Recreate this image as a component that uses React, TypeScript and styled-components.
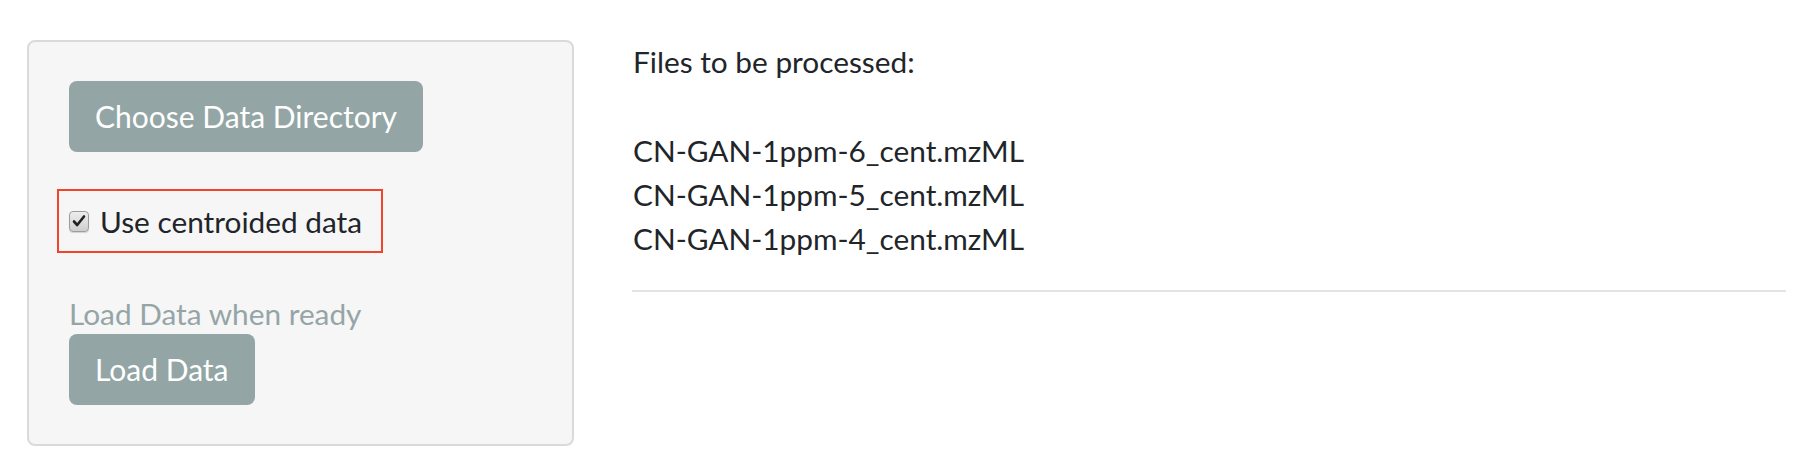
import React from "react";
import styled, { createGlobalStyle } from "styled-components";

const Global = createGlobalStyle`
  html, body { margin: 0; padding: 0; background: #ffffff; }
  body { font-family: Lato, "Noto Sans", sans-serif; color: #212529; }
`;

const Page = styled.div`
  display: flex;
  align-items: flex-start;
  width: 1815px;
  height: 460px;
  box-sizing: border-box;
  padding: 40px 29px 0 27px;
  gap: 59px;
`;

const Well = styled.div`
  width: 547px;
  height: 406px;
  box-sizing: border-box;
  background: #f6f6f6;
  border: 2px solid #dadada;
  border-radius: 8px;
  padding: 39px 0 0 40px;
  display: flex;
  flex-direction: column;
  align-items: flex-start;
`;

const Button = styled.button`
  font-family: Lato, "Noto Sans", sans-serif;
  font-size: 30px;
  color: #ffffff;
  background: #93a6a5;
  border: none;
  border-radius: 8px;
  height: 71px;
  padding: 0 26px;
  line-height: 71px;
  cursor: pointer;
`;

const CheckRow = styled.label`
  display: flex;
  align-items: center;
  gap: 11px;
  margin: 37px 0 0 -12px;
  padding: 0 19px 0 10px;
  height: 60px;
  border: 2px solid #f0452b;
  font-size: 29.8px;
  color: #212529;
`;

const Box = styled.span`
  width: 20px;
  height: 21px;
  box-sizing: border-box;
  border: 1px solid #9d9d9d;
  border-radius: 4px;
  background: linear-gradient(#ededed, #cfcfcf);
  box-shadow: 0 1px 1px rgba(0, 0, 0, 0.15);
  display: flex;
  align-items: center;
  justify-content: center;
`;

const Muted = styled.div`
  margin-top: 41px;
  font-size: 29.8px;
  line-height: 40px;
  color: #95a5a6;
`;

const Main = styled.div`
  flex: 1;
  display: flex;
  flex-direction: column;
`;

const Heading = styled.div`
  font-size: 29.8px;
  line-height: 43px;
  margin-bottom: 46px;
`;

const FileLine = styled.div`
  font-size: 29.8px;
  line-height: 44px;
`;

const Rule = styled.hr`
  border: none;
  border-top: 2px solid #e3e3e3;
  margin: 29px 0 0 -1px;
`;

const files = [
  "CN-GAN-1ppm-6_cent.mzML",
  "CN-GAN-1ppm-5_cent.mzML",
  "CN-GAN-1ppm-4_cent.mzML",
];

export default function App() {
  return (
    <>
      <Global />
      <Page>
        <Well>
          <Button>Choose Data Directory</Button>
          <CheckRow>
            <Box>
              <svg width="14" height="14" viewBox="0 0 14 14">
                <path
                  d="M2 7.5 L5.2 11 L12 2.5"
                  fill="none"
                  stroke="#222"
                  strokeWidth="2.6"
                  strokeLinecap="round"
                  strokeLinejoin="round"
                />
              </svg>
            </Box>
            Use centroided data
          </CheckRow>
          <Muted>Load Data when ready</Muted>
          <Button>Load Data</Button>
        </Well>
        <Main>
          <Heading>Files to be processed:</Heading>
          {files.map((f) => (
            <FileLine key={f}>{f}</FileLine>
          ))}
          <Rule />
        </Main>
      </Page>
    </>
  );
}
